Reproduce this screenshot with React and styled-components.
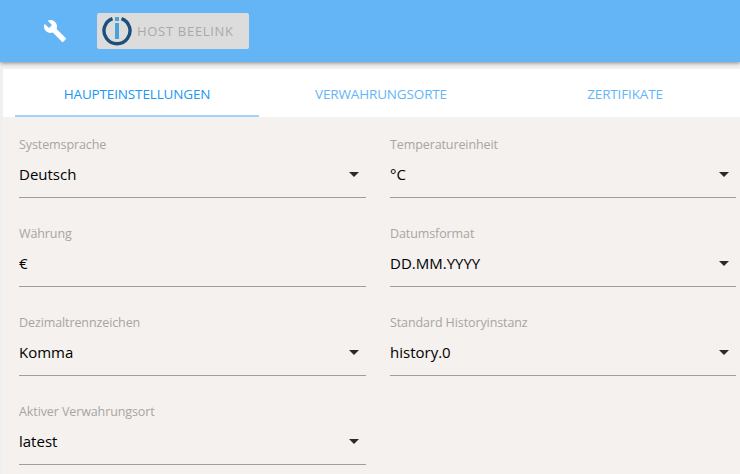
import React from 'react';
import styled, { createGlobalStyle } from 'styled-components';

const Global = createGlobalStyle`
  html, body { margin: 0; padding: 0; background: #f0f0f0; }
  body { font-family: "Open Sans", "Noto Sans", "Liberation Sans", sans-serif; overflow: hidden; }
`;
const Page = styled.div`width: 740px; height: 474px; overflow: hidden; display: flex; flex-direction: column;`;
const Header = styled.header`
  height: 62px; flex: none; background: #64b5f6; display: flex; align-items: center;
  padding-left: 43px; box-shadow: 0 1px 4px rgba(0,0,0,.45);
`;
const Tool = styled.svg`width: 24px; height: 24px; fill: #fff; margin-right: 30px;`;
const Host = styled.div`
  width: 152px; height: 36px; background: #dcdcdc; border-radius: 2px; display: flex; align-items: center;
  padding-left: 5px; box-sizing: border-box; color: #aca8a4; font-size: 13px; letter-spacing: .7px; gap: 5px;
`;
const Main = styled.main`margin: 7px 0 0 3px; flex: 1; display: flex; flex-direction: column; min-height: 0;`;
const Tabs = styled.nav`height: 48px; flex: none; background: #fff; display: flex; padding-left: 12px; overflow: hidden;`;
const Tab = styled.div`
  width: 244px; flex: none; box-sizing: border-box; display: flex; align-items: center; justify-content: center;
  font-size: 13.5px; letter-spacing: -.15px; padding-top: 4px; color: ${p => p.$active ? '#2196f3' : '#64b5f6'};
  border-bottom: 2px solid ${p => p.$active ? '#a3d4f7' : 'transparent'};
`;
const Form = styled.section`
  flex: 1; background: #f4f1ee; display: grid; grid-template-columns: 347px 346px; column-gap: 24px;
  grid-auto-rows: 89px; padding: 19px 0 0 16px; align-content: start;
`;
const Field = styled.div`display: flex; flex-direction: column; height: 62px;`;
const Label = styled.label`font-size: 12.5px; line-height: 18px; color: #a8a5a2; letter-spacing: -.1px;`;
const Value = styled.div`
  flex: 1; display: flex; align-items: center; justify-content: space-between; padding-top: 5px;
  font-size: 15px; color: #000; border-bottom: 1px solid #a09d9a; box-sizing: border-box; padding-bottom: 8px;
`;
const Arrow = styled.span`
  width: 0; height: 0; border-left: 5px solid transparent; border-right: 5px solid transparent;
  border-top: 5px solid #2a2a2a; margin-right: 7px;
`;

const fields = [
  ['Systemsprache', 'Deutsch', true], ['Temperatureinheit', '°C', true],
  ['Währung', '€', false], ['Datumsformat', 'DD.MM.YYYY', true],
  ['Dezimaltrennzeichen', 'Komma', true], ['Standard Historyinstanz', 'history.0', true],
  ['Aktiver Verwahrungsort', 'latest', true],
];

export default function App() {
  return (
    <Page>
      <Global />
      <Header>
        <Tool viewBox="0 0 24 24"><path d="M22.7 19l-9.1-9.1c.9-2.3.4-5-1.5-6.9-2-2-5-2.4-7.4-1.3L9 6 6 9 1.6 4.7C.4 7.1.9 10.1 2.9 12.1c1.9 1.9 4.6 2.4 6.9 1.5l9.1 9.1c.4.4 1 .4 1.4 0l2.3-2.3c.5-.4.5-1.1.1-1.4z" /></Tool>
        <Host>
          <svg width="30" height="30" viewBox="0 0 30 30">
            <path d="M10.5 2.6 A13 13 0 1 0 19.5 2.6" fill="none" stroke="#1d4f7c" strokeWidth="3.4" />
            <rect x="13" y="1" width="4" height="4" fill="#4aa3d8" />
            <rect x="13" y="7" width="4" height="16" fill="#4aa3d8" />
          </svg>
          <span>HOST BEELINK</span>
        </Host>
      </Header>
      <Main>
        <Tabs>
          <Tab $active>HAUPTEINSTELLUNGEN</Tab>
          <Tab>VERWAHRUNGSORTE</Tab>
          <Tab>ZERTIFIKATE</Tab>
        </Tabs>
        <Form>
          {fields.map(([l, v, s]) => (
            <Field key={l}>
              <Label>{l}</Label>
              <Value>{v}{s && <Arrow />}</Value>
            </Field>
          ))}
        </Form>
      </Main>
    </Page>
  );
}
